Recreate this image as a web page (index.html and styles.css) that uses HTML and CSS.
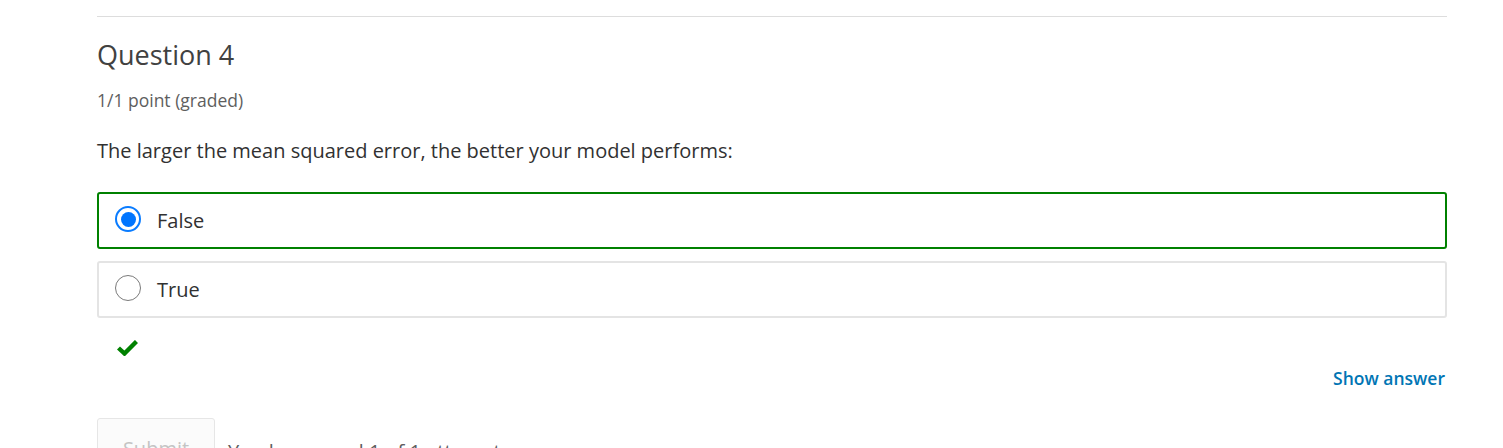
FILE: index.html
```html
<!DOCTYPE html>
<html>
<head>
<meta charset="utf-8">
<link rel="stylesheet" href="styles.css">
</head>
<body>
<div class="page">
  <hr class="divider">
  <h3 class="title">Question 4</h3>
  <div class="points">1/1 point (graded)</div>
  <p class="prompt">The larger the mean squared error, the better your model performs:</p>
  <div class="options">
    <label class="option selected">
      <span class="radio checked"></span>
      <span class="label">False</span>
    </label>
    <label class="option">
      <span class="radio"></span>
      <span class="label">True</span>
    </label>
  </div>
  <div class="status">
    <svg class="check" width="21" height="16" viewBox="0 0 21 16"><path d="M1.5 8 L7.5 13.5 L19.5 1.5" fill="none" stroke="#008100" stroke-width="4.4" stroke-linejoin="miter"/></svg>
  </div>
  <div class="actions-right">
    <a class="show-answer" href="#">Show answer</a>
  </div>
  <div class="submit-row">
    <button class="submit" disabled>Submit</button>
    <span class="attempts">You have used 1 of 1 attempt</span>
  </div>
</div>
</body>
</html>
```

FILE: styles.css
```css
html, body {
  margin: 0;
  padding: 0;
  background: #fff;
}
body {
  font-family: "Open Sans", "Liberation Sans", sans-serif;
  color: #313131;
}
.page {
  width: 1350px;
  margin-left: 97px;
  padding-top: 16px;
  display: flex;
  flex-direction: column;
}
.divider {
  margin: 0;
  border: 0;
  border-top: 1px solid #dddddd;
  height: 0;
}
.title {
  margin: 20px 0 0 0;
  font-size: 27px;
  font-weight: 400;
  line-height: 36px;
  color: #414141;
}
.points {
  margin-top: 15px;
  font-size: 17.5px;
  line-height: 24px;
  color: #5e5e5e;
}
.prompt {
  margin: 24px 0 0 0;
  font-size: 20px;
  line-height: 30px;
  color: #313131;
}
.options {
  margin-top: 26px;
  display: flex;
  flex-direction: column;
  gap: 12px;
}
.option {
  height: 57px;
  box-sizing: border-box;
  border: 2px solid #e4e4e4;
  border-radius: 3px;
  display: flex;
  align-items: center;
  padding-left: 16px;
  font-size: 20px;
  color: #313131;
}
.option.selected {
  border-color: #008100;
}
.radio {
  width: 26px;
  height: 26px;
  margin-top: -3px;
  box-sizing: border-box;
  border-radius: 50%;
  border: 1.5px solid #7a7a7a;
  display: flex;
  align-items: center;
  justify-content: center;
  flex: none;
}
.radio.checked {
  border: 2px solid #0a7cff;
}
.radio.checked::after {
  content: "";
  width: 15px;
  height: 15px;
  border-radius: 50%;
  background: #0075ff;
}
.label {
  margin-left: 16px;
  line-height: 28px;
}
.status {
  margin-top: 22px;
  padding-left: 20px;
  height: 16px;
  display: flex;
}
.check {
  display: block;
}
.actions-right {
  margin-top: 9px;
  display: flex;
  justify-content: flex-end;
  padding-right: 2px;
}
.show-answer {
  font-size: 17.5px;
  font-weight: 600;
  color: #0075b4;
  text-decoration: none;
  line-height: 26px;
}
.submit-row {
  margin-top: 27px;
  display: flex;
  align-items: flex-start;
}
.submit {
  width: 118px;
  height: 52px;
  box-sizing: border-box;
  border: 1px solid #e6e6e6;
  border-radius: 3px;
  background: #fbfbfb;
  color: #c4c4c4;
  font-family: "Open Sans", "Liberation Sans", sans-serif;
  font-size: 20px;
  padding: 10px 0 0 0;
  text-align: center;
  line-height: 28px;
}
.attempts {
  margin-left: 13px;
  margin-top: 22px;
  font-size: 20px;
  color: #5e5e5e;
  line-height: 24px;
}
```
